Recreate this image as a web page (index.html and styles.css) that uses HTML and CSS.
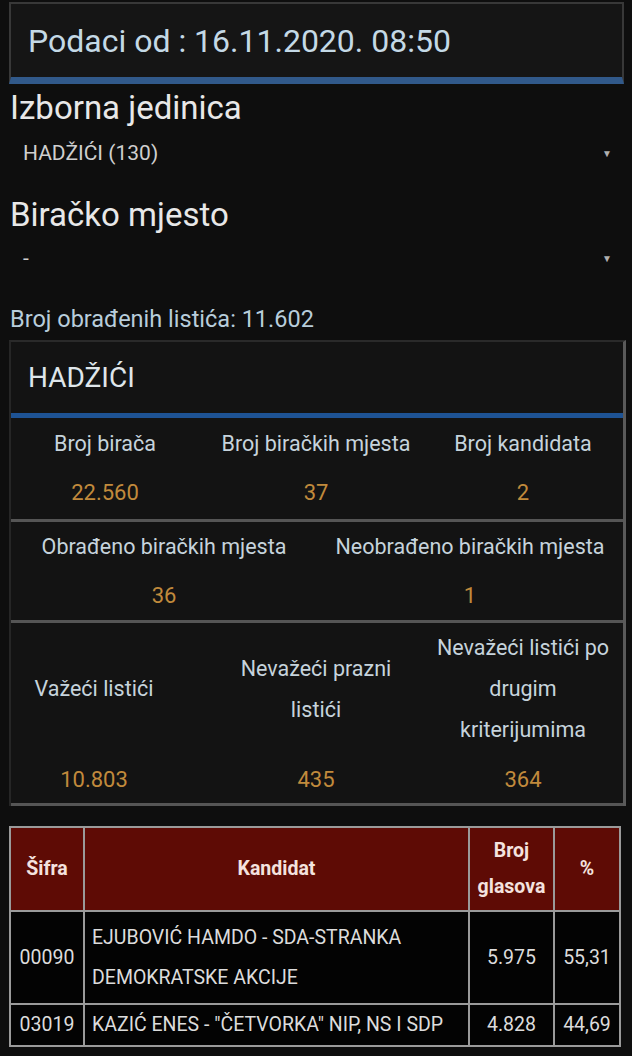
FILE: index.html
```html
<!DOCTYPE html>
<html lang="bs">
<head>
<meta charset="utf-8">
<title>Rezultati</title>
<link rel="stylesheet" href="styles.css">
</head>
<body>
<div class="page">
  <div class="date-box">Podaci od : 16.11.2020. 08:50</div>

  <div class="field-label">Izborna jedinica</div>
  <div class="select first"><span>HADŽIĆI (130)</span><span class="arrow">▼</span></div>

  <div class="field-label second">Biračko mjesto</div>
  <div class="select"><span>-</span><span class="arrow">▼</span></div>

  <div class="processed">Broj obrađenih listića: 11.602</div>

  <div class="card">
    <div class="card-title">HADŽIĆI</div>
    <div class="stat-row row-a">
      <div class="stat"><div class="lbl">Broj birača</div><div class="val">22.560</div></div>
      <div class="stat"><div class="lbl">Broj biračkih mjesta</div><div class="val">37</div></div>
      <div class="stat c3"><div class="lbl">Broj kandidata</div><div class="val">2</div></div>
    </div>
    <div class="stat-row row-b">
      <div class="stat"><div class="lbl">Obrađeno biračkih mjesta</div><div class="val">36</div></div>
      <div class="stat"><div class="lbl">Neobrađeno biračkih mjesta</div><div class="val">1</div></div>
    </div>
    <div class="stat-row row-c">
      <div class="stat"><div class="lbl"><span>Važeći listići</span></div><div class="val">10.803</div></div>
      <div class="stat c2"><div class="lbl"><span>Nevažeći prazni listići</span></div><div class="val">435</div></div>
      <div class="stat c3"><div class="lbl"><span>Nevažeći listići po drugim kriterijumima</span></div><div class="val">364</div></div>
    </div>
  </div>

  <table class="results">
    <thead>
      <tr>
        <th class="col-code">Šifra</th>
        <th class="col-name">Kandidat</th>
        <th class="col-votes">Broj glasova</th>
        <th class="col-pct">%</th>
      </tr>
    </thead>
    <tbody>
      <tr>
        <td class="code">00090</td>
        <td class="name">EJUBOVIĆ HAMDO - SDA-STRANKA DEMOKRATSKE AKCIJE</td>
        <td class="num">5.975</td>
        <td class="num">55,31</td>
      </tr>
      <tr>
        <td class="code">03019</td>
        <td class="name">KAZIĆ ENES - "ČETVORKA" NIP, NS I SDP</td>
        <td class="num">4.828</td>
        <td class="num">44,69</td>
      </tr>
    </tbody>
  </table>
</div>
</body>
</html>
```
FILE: styles.css
```css
html, body {
  margin: 0;
  padding: 0;
  background: #0e0e0e;
}
body {
  font-family: Roboto, "Liberation Sans", sans-serif;
  color: #e4e4e4;
}
.page {
  padding: 2px 8px 10px 9px;
}
.date-box {
  background: #151515;
  border: 2px solid #383838;
  border-bottom: 7px solid #31598a;
  box-sizing: border-box;
  height: 82px;
  padding-left: 17px;
  display: flex;
  align-items: center;
  font-size: 32px;
  color: #c4d9e6;
}
.field-label {
  margin-top: 6px;
  padding-left: 1px;
  font-size: 33px;
  line-height: 36px;
  color: #e8e8e8;
}
.field-label.second {
  margin-top: 21px;
}
.select {
  display: flex;
  justify-content: space-between;
  align-items: center;
  margin-top: 2px;
  padding: 0 12px 0 14px;
  height: 46px;
  font-size: 21px;
  color: #cfcfcf;
}
.select.first {
  margin-top: 4px;
}
.arrow {
  font-size: 10px;
  color: #b0b0b0;
}
.processed {
  margin-top: 24px;
  padding-left: 1px;
  font-size: 23.5px;
  line-height: 28px;
  color: #b8cddb;
}
.card {
  margin-top: 7px;
  background: #131313;
  border-top: 2px solid #2a2a2a;
  border-left: 2px solid #262626;
  border-right: 3px solid #5a5a5a;
  width: 617px;
  box-sizing: border-box;
}
.card-title {
  height: 76px;
  box-sizing: border-box;
  padding: 20px 0 0 17px;
  font-size: 28px;
  line-height: 32px;
  color: #dfe6ea;
  border-bottom: 5px solid #1e5394;
}
.stat-row {
  display: grid;
  border-bottom: 3px solid #555;
}
.row-a { grid-template-columns: 188px 234px 1fr; padding: 5px 0 6px; }
.row-b { grid-template-columns: 1fr 1fr; padding: 4px 0 4px; }
.row-c { grid-template-columns: 166px 246px 1fr; padding: 4px 0 3px; }
.stat {
  display: flex;
  flex-direction: column;
  align-items: center;
  text-align: center;
}
.row-a .c3 { padding-right: 10px; }
.row-c .c2 { padding-left: 32px; }
.row-c .c2 .lbl span { display: block; width: 180px; }
.row-c .c3 .lbl span { display: block; width: 186px; }
.lbl {
  font-size: 21.5px;
  line-height: 41px;
  color: #c6d3dc;
  white-space: nowrap;
}
.row-c .lbl {
  white-space: normal;
  height: 123px;
  display: flex;
  align-items: center;
  justify-content: center;
}
.val {
  margin-top: 8px;
  font-size: 22px;
  line-height: 41px;
  color: #c18a3c;
}
.row-c .val { margin-top: 9px; }
.results {
  margin-top: 20px;
  width: 612px;
  border-collapse: collapse;
  table-layout: fixed;
  border: 2px solid #9a9a9a;
}
.results th, .results td {
  border: 2px solid #9a9a9a;
  padding: 0 4px;
}
.results th {
  background: #5e0b05;
  color: #f4e2df;
  font-weight: bold;
  font-size: 19.5px;
  line-height: 36px;
  height: 82px;
  text-align: center;
}
.col-code { width: 64px; }
.col-votes { width: 75px; }
.col-pct { width: 56px; }
.results td {
  background: #030303;
  color: #dcdcdc;
  font-size: 19.5px;
  line-height: 40px;
}
.results td.code { text-align: center; padding: 0 2px; }
.results td.name { padding-left: 7px; }
.results td.num { text-align: center; }
.results tbody tr:first-child td { height: 91px; }
.results tbody tr:last-child td { height: 40px; }
```
